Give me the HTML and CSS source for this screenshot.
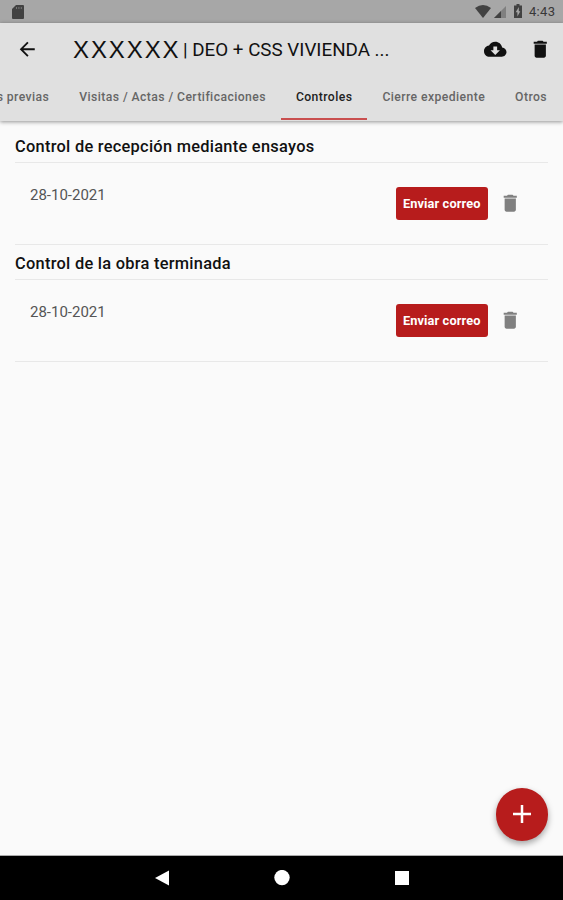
FILE: index.html
```html
<!DOCTYPE html>
<html lang="es">
<head>
<meta charset="utf-8">
<title>Controles</title>
<link rel="stylesheet" href="styles.css">
</head>
<body>
<svg class="defs" aria-hidden="true">
  <symbol id="trash" viewBox="0 0 24 24"><path d="M6 19c0 1.100.9 2 2 2h8c1.100 0 2-.9 2-2V7H6v12zM19 4h-3.500l-1-1h-5l-1 1H5v2h14V4z"/></symbol>
</svg>
<div class="screen">
  <div class="status">
    <svg class="sd" viewBox="0 0 12 14"><path d="M4 0h7a1 1 0 0 1 1 1v12a1 1 0 0 1-1 1H1a1 1 0 0 1-1-1V4z"/><path class="slots" d="M4.500 2v2M6.900 2v2M9.300 2v2"/></svg>
    <div class="status-right">
      <svg class="wifi" viewBox="0 0 16 13"><path d="M0 3Q8-3 16 3L8 13z"/></svg>
      <svg class="signal" viewBox="0 0 12 12"><path class="faint" d="M12 0v12H0z"/><path d="M7 5v7H0z"/></svg>
      <svg class="battery" viewBox="0 0 8 14"><path fill-rule="evenodd" d="M2.500 0h3v1.500H8V14H0V1.500h2.500zM4.800 3L1.700 8.200h1.700V12.500L6.300 7.200H4.800z"/></svg>
      <span class="clock">4:43</span>
    </div>
  </div>
  <header class="appbar">
    <div class="toolbar">
      <svg class="icon back" viewBox="0 0 24 24"><path d="M20 11H7.830l5.590-5.590L12 4l-8 8 8 8 1.410-1.410L7.830 13H20v-2z"/></svg>
      <h1 class="title"><span class="mask">XXXXXX</span><span class="name">| DEO + CSS VIVIENDA ...</span></h1>
      <svg class="icon" viewBox="0 0 24 24"><path d="M19.350 10.040C18.670 6.590 15.640 4 12 4 9.110 4 6.600 5.640 5.350 8.040 2.340 8.360 0 10.910 0 14c0 3.310 2.690 6 6 6h13c2.760 0 5-2.240 5-5 0-2.640-2.050-4.780-4.650-4.960zM17 13l-5 5-5-5h3V9h4v4h3z"/></svg>
      <svg class="icon bin" viewBox="0 0 24 24"><use href="#trash"/></svg>
    </div>
    <nav class="tabs">
      <span class="tab">s previas</span>
      <span class="tab">Visitas / Actas / Certificaciones</span>
      <span class="tab active">Controles</span>
      <span class="tab">Cierre expediente</span>
      <span class="tab">Otros</span>
    </nav>
  </header>
  <main class="content">
    <section class="group">
      <h2>Control de recepción mediante ensayos</h2>
      <div class="row">
        <span class="date">28-10-2021</span>
        <button class="send">Enviar correo</button>
        <svg class="icon remove" viewBox="0 0 24 24"><use href="#trash"/></svg>
      </div>
    </section>
    <section class="group">
      <h2>Control de la obra terminada</h2>
      <div class="row">
        <span class="date">28-10-2021</span>
        <button class="send">Enviar correo</button>
        <svg class="icon remove" viewBox="0 0 24 24"><use href="#trash"/></svg>
      </div>
    </section>
    <button class="fab" aria-label="Añadir"><svg viewBox="0 0 18 18"><path d="M9 0v18M0 9h18"/></svg></button>
  </main>
  <footer class="navbar">
    <svg viewBox="0 0 16 16"><path d="M1 8L15 .5v15z"/></svg>
    <svg viewBox="0 0 16 16"><circle cx="8" cy="7.600" r="7.700"/></svg>
    <svg viewBox="0 0 16 16"><path d="M1 1h14v14H1z"/></svg>
  </footer>
</div>
</body>
</html>
```
FILE: styles.css
```css
* { box-sizing: border-box; }
body { margin: 0; font-family: Roboto, "Liberation Sans", sans-serif; color: #111; }
svg { display: block; flex: none; }
.defs { position: absolute; width: 0; height: 0; }
.screen { width: 563px; height: 900px; display: flex; flex-direction: column; background: #fafafa; overflow: hidden; }

.status { height: 23px; background: #a7a7a7; display: flex; align-items: center; justify-content: space-between; padding: 0 7px 0 12px; fill: #424242; }
.sd { width: 12px; height: 14px; }
.slots { stroke: #777; stroke-width: 1; }
.status-right { display: flex; align-items: center; }
.wifi { width: 16px; height: 13px; }
.signal { width: 12px; height: 12px; margin-left: 3px; }
.faint { fill: #808080; }
.battery { width: 8px; height: 14px; margin: 0 7px 2px 8px; }
.clock { font-size: 13px; font-weight: 400; letter-spacing: .3px; color: #383838; line-height: 23px; width: 27px; }

.appbar { height: 98px; flex: none; background: #e0e0e0; box-shadow: 0 1px 4px rgba(0,0,0,.42); position: relative; z-index: 1; }
.toolbar { height: 52px; display: flex; align-items: center; padding: 0 12px 0 15.5px; }
.icon { width: 22.5px; height: 22.5px; fill: #111; }
.title { flex: 1; display: flex; align-items: center; margin: 0 0 0 35px; font-size: 18.8px; font-weight: 400; line-height: 24px; white-space: nowrap; }
.mask { font-family: "Liberation Sans", sans-serif; font-size: 24px; letter-spacing: 1.9px; width: 110px; padding-top: 2px; }
.name { padding-top: 2px; }
.bin { margin-left: 22px; }
.tabs { display: flex; justify-content: flex-end; height: 46px; padding-right: 1px; }
.tab { flex: none; padding: 0 15px; line-height: 45px; height: 45px; font-size: 12.2px; font-weight: 500; letter-spacing: .42px; color: #666; white-space: nowrap; }
.tab.active { color: #222; border-bottom: 2px solid #c94f4f; }

.content { flex: 1; padding: 7px 15px 0; position: relative; border-bottom: 1px solid #aaa; }
.group h2 { margin: 0; height: 35px; line-height: 37px; font-size: 16.4px; font-weight: 500; letter-spacing: .27px; border-bottom: 1px solid #e8e8e8; }
.group { height: 116.500px; }
.row { height: 82px; display: flex; align-items: center; padding: 0 26.5px 0 15px; border-bottom: 1px solid #e8e8e8; }
.date { flex: 1; align-self: flex-start; padding-top: 22px; font-size: 15px; line-height: 20px; color: #555; }
.send { width: 92.5px; height: 33px; padding: 0; border: 0; border-radius: 3px; background: #b71c1c; color: #fff; font: 700 12.800px Roboto, sans-serif; letter-spacing: .1px; }
.remove { margin-left: 11px; fill: #808080; }
.fab { position: absolute; right: 15px; bottom: 14.5px; width: 52.5px; height: 52.5px; border: 0; border-radius: 50%; background: #b71c1c; padding: 0; display: grid; place-items: center; box-shadow: 0 3px 6px rgba(0,0,0,.35); }
.fab svg { width: 18px; height: 18px; stroke: #fff; stroke-width: 2.500; }
.navbar { height: 44px; flex: none; background: #000; fill: #fff; display: flex; justify-content: center; align-items: center; gap: 104px; }
.navbar svg { width: 16px; height: 16px; }
```
